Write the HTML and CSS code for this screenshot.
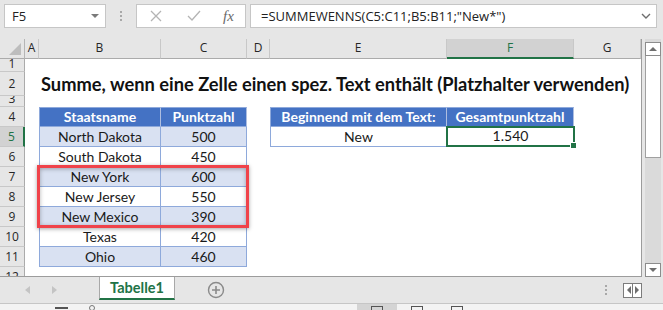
FILE: index.html
```html
<!DOCTYPE html>
<html lang="de">
<head>
    <title>Summe, wenn eine Zelle einen spez. Text enthält</title>
    <meta charset="UTF-8">
    <link rel="stylesheet" href="styles.css">
</head>
<body>
<div class="app">
    <div class="toolbar">
        <div class="namebox">
            <span class="nb-text">F5</span>
            <span class="nb-arrow"></span>
        </div>
        <div class="grip"><i></i><i></i><i></i></div>
        <div class="fxbox">
            <svg class="ico" width="12" height="12" viewBox="0 0 12 12"><path d="M1 1 L11 11 M11 1 L1 11" stroke="#b4b4b4" stroke-width="1.3" fill="none"/></svg>
            <svg class="ico" width="14" height="12" viewBox="0 0 14 12"><path d="M1 6 L5 10 L13 1" stroke="#b4b4b4" stroke-width="1.3" fill="none"/></svg>
            <span class="fx">fx</span>
        </div>
        <div class="formula">
            <span class="f-text">=SUMMEWENNS(C5:C11;B5:B11;"New*")</span>
            <svg width="10" height="6" viewBox="0 0 10 6"><path d="M1 1 L5 5 L9 1" stroke="#6e6e6e" stroke-width="1.4" fill="none"/></svg>
        </div>
    </div>

    <div class="main">
        <div class="sheet">
            <div class="row colhead">
                <div class="corner"><span class="tri"></span></div>
                <div class="ch">A</div>
                <div class="ch">B</div>
                <div class="ch">C</div>
                <div class="ch">D</div>
                <div class="ch">E</div>
                <div class="ch sel">F</div>
                <div class="ch">G</div>
            </div>
            <div class="row r1"><div class="rh">1</div></div>
            <div class="row r2">
                <div class="rh">2</div><div></div>
                <div class="title">Summe, wenn eine Zelle einen spez. Text enthält (Platzhalter verwenden)</div>
            </div>
            <div class="row r3"><div class="rh">3</div></div>
            <div class="row">
                <div class="rh">4</div><div></div>
                <div class="c th first">Staatsname</div>
                <div class="c th">Punktzahl</div>
                <div></div>
                <div class="c th first">Beginnend mit dem Text:</div>
                <div class="c th">Gesamtpunktzahl</div>
            </div>
            <div class="row">
                <div class="rh sel">5</div><div></div>
                <div class="c band first">North Dakota</div>
                <div class="c band">500</div>
                <div></div>
                <div class="c first">New</div>
                <div class="c active">1.540<span class="handle"></span></div>
            </div>
            <div class="row">
                <div class="rh">6</div><div></div>
                <div class="c first">South Dakota</div>
                <div class="c">450</div>
            </div>
            <div class="row">
                <div class="rh">7</div><div></div>
                <div class="c band first">New York</div>
                <div class="c band">600</div>
            </div>
            <div class="row">
                <div class="rh">8</div><div></div>
                <div class="c first">New Jersey</div>
                <div class="c">550</div>
            </div>
            <div class="row">
                <div class="rh">9</div><div></div>
                <div class="c band first">New Mexico</div>
                <div class="c band">390</div>
            </div>
            <div class="row">
                <div class="rh">10</div><div></div>
                <div class="c first">Texas</div>
                <div class="c">420</div>
            </div>
            <div class="row">
                <div class="rh">11</div><div></div>
                <div class="c band first">Ohio</div>
                <div class="c band">460</div>
            </div>
            <div class="row">
                <div class="rh">12</div>
            </div>
            <div class="redbox"></div>
        </div>
        <div class="vscroll">
            <div class="sb-btn"><span class="up"></span></div>
            <div class="thumb"></div>
            <div class="track"></div>
            <div class="sb-btn"><span class="down"></span></div>
        </div>
    </div>

    <div class="tabbar">
        <div class="nav"><span class="left"></span><span class="right"></span></div>
        <div class="tab">Tabelle1</div>
        <div class="plus">
            <svg width="18" height="18" viewBox="0 0 18 18"><circle cx="9" cy="9" r="7.5" stroke="#8a8a8a" stroke-width="1.4" fill="none"/><path d="M9 5 V13 M5 9 H13" stroke="#8a8a8a" stroke-width="1.6"/></svg>
        </div>
        <div class="spacer"></div>
        <div class="grip small"><i></i><i></i><i></i></div>
        <div class="split"><span class="left"></span><span class="right"></span></div>
    </div>

    <div class="statusbar">
        <span class="st-bar"></span>
        <span class="st-dot"></span>
        <div class="views">
            <span class="view on"><i></i></span>
            <span class="view"><i></i></span>
            <span class="view"><i></i></span>
        </div>
    </div>
</div>
</body>
</html>
```

FILE: styles.css
```css
body {
    margin: 0;
    background-color: #e6e6e6;
}

.app {
    width: 663px;
    height: 310px;
    overflow: hidden;
    background-color: #e6e6e6;
    font-family: "Open Sans", "Noto Sans", sans-serif;
}

/* formula bar */
.toolbar {
    height: 39px;
    display: flex;
    align-items: flex-start;
    padding-top: 4px;
    box-sizing: border-box;
}

.namebox {
    margin-left: 4px;
    width: 102px;
    height: 24px;
    box-sizing: border-box;
    background-color: white;
    border: 1px solid #c6c6c6;
    display: flex;
    align-items: center;
    justify-content: space-between;
    padding: 0 5px 0 7px;
}

.nb-text {
    font-size: 13px;
    color: #222;
}

.nb-arrow {
    width: 0;
    height: 0;
    border-left: 4px solid transparent;
    border-right: 4px solid transparent;
    border-top: 4px solid #7a7a7a;
    margin-right: 1px;
}

.grip {
    width: 30px;
    height: 24px;
    display: flex;
    flex-direction: column;
    align-items: center;
    justify-content: center;
    gap: 2px;
}

.grip i {
    width: 2px;
    height: 2px;
    background-color: #a8a8a8;
}

.fxbox {
    width: 110px;
    height: 24px;
    box-sizing: border-box;
    background-color: white;
    border: 1px solid #c6c6c6;
    display: flex;
    align-items: center;
    padding-left: 13px;
    gap: 25px;
}

.fx {
    font-family: "Liberation Serif", serif;
    font-style: italic;
    font-size: 15px;
    color: #6a6a6a;
    margin-left: -3px;
}

.formula {
    margin-left: 4px;
    width: 407px;
    height: 24px;
    box-sizing: border-box;
    background-color: white;
    border: 1px solid #c6c6c6;
    display: flex;
    align-items: center;
    justify-content: space-between;
    padding: 0 5px 0 10px;
}

.f-text {
    font-size: 13px;
    color: #222;
}

/* sheet */
.main {
    display: flex;
    height: 238px;
}

.sheet {
    position: relative;
    width: 642px;
    height: 238px;
    background-color: white;
    border-right: 1px solid #9c9c9c;
    border-bottom: 1px solid #9c9c9c;
    box-sizing: border-box;
    overflow: hidden;
}

.row {
    display: grid;
    grid-template-columns: 25px 14px 122px 86px 23px 177px 127px 1fr;
    height: 20px;
    font-family: "Lato", sans-serif;
    font-size: 14px;
    color: #1a1a1a;
}

.r1 { height: 14px; }
.r2 { height: 24px; }
.r3 { height: 11px; }

.colhead {
    height: 19px;
    background-color: #e6e6e6;
    font-family: "Open Sans", sans-serif;
    font-size: 12px;
    color: #262626;
}

.corner {
    position: relative;
    border-right: 1px solid #b5b5b5;
    border-bottom: 1px solid #ababab;
}

.tri {
    position: absolute;
    right: 3px;
    bottom: 3px;
    width: 0;
    height: 0;
    border-left: 12px solid transparent;
    border-bottom: 12px solid #bdbdbd;
}

.ch {
    border-right: 1px solid #c8c8c8;
    border-bottom: 1px solid #ababab;
    text-align: center;
    line-height: 18px;
}

.ch.sel {
    background-color: #d2d2d2;
    border-bottom: 2px solid #217346;
    color: #217346;
}

.rh {
    background-color: #e6e6e6;
    border-right: 1px solid #ababab;
    border-bottom: 1px solid #c8c8c8;
    box-sizing: border-box;
    font-family: "Open Sans", sans-serif;
    font-size: 12px;
    color: #262626;
    display: flex;
    align-items: center;
    justify-content: center;
    overflow: hidden;
}

.r1 .rh, .r3 .rh {
    align-items: flex-end;
    line-height: 14px;
}

.rh.sel {
    background-color: #d2d2d2;
    border-right: 2px solid #217346;
    color: #217346;
}

.title {
    grid-column: 3 / 9;
    white-space: nowrap;
    font-weight: bold;
    font-size: 18.3px;
    line-height: 24px;
    padding-left: 2px;
    color: #111;
}

.c {
    position: relative;
    box-sizing: border-box;
    text-align: center;
    line-height: 19px;
    border-right: 1px solid #8ea9db;
    border-bottom: 1px solid #8ea9db;
    white-space: nowrap;
}

.c.first {
    border-left: 1px solid #8ea9db;
}

.th {
    background-color: #4472c4;
    color: white;
    font-weight: bold;
    border-top: 1px solid #8ea9db;
    line-height: 18px;
    border-right-color: #aebee0;
}

.band {
    background-color: #d9e1f2;
}

.active {
    border: 2px solid #217346;
    line-height: 16px;
    margin: -1px -1px 0 -1px;
}

.handle {
    position: absolute;
    right: -4px;
    bottom: -4px;
    width: 5px;
    height: 5px;
    background-color: #217346;
    border: 1px solid white;
}

.redbox {
    position: absolute;
    left: 37px;
    top: 126px;
    width: 212px;
    height: 63px;
    box-sizing: border-box;
    border: 3px solid #f0434a;
    box-shadow: 0 1px 4px rgba(0, 0, 0, 0.35), inset 0 1px 4px rgba(0, 0, 0, 0.3);
}

/* vertical scrollbar */
.vscroll {
    width: 16px;
    margin-left: 3px;
    padding-top: 3px;
    display: flex;
    flex-direction: column;
    background-color: #dadada;
}

.sb-btn {
    height: 14px;
    box-sizing: border-box;
    border: 1px solid #8c8c8c;
    background-color: white;
    display: flex;
    align-items: center;
    justify-content: center;
}

.up {
    border-left: 4px solid transparent;
    border-right: 4px solid transparent;
    border-bottom: 4px solid #6e6e6e;
}

.down {
    border-left: 4px solid transparent;
    border-right: 4px solid transparent;
    border-top: 4px solid #6e6e6e;
}

.thumb {
    height: 102px;
    box-sizing: border-box;
    border: 1px solid #a0a0a0;
    border-top: none;
    background-color: white;
}

.track {
    flex: 1;
}

/* sheet tabs */
.tabbar {
    height: 26px;
    display: flex;
    align-items: center;
    border-bottom: 1px solid #c6c6c6;
}

.nav {
    width: 99px;
    display: flex;
    gap: 22px;
    padding-left: 25px;
    box-sizing: border-box;
}

.nav span, .split span {
    width: 0;
    height: 0;
    border-top: 4px solid transparent;
    border-bottom: 4px solid transparent;
}

.nav .left {
    border-right: 5px solid #c4c4c4;
}

.nav .right {
    border-left: 5px solid #c4c4c4;
}

.tab {
    align-self: flex-start;
    width: 76px;
    height: 24px;
    box-sizing: border-box;
    background-color: white;
    border-left: 1px solid #a8a8a8;
    border-right: 1px solid #a8a8a8;
    border-bottom: 2px solid #217346;
    margin-top: -1px;
    text-align: center;
    font-family: "Lato", sans-serif;
    font-weight: bold;
    font-size: 14.5px;
    line-height: 23px;
    color: #217346;
}

.plus {
    margin-left: 32px;
    display: flex;
}

.spacer {
    flex: 1;
}

.grip.small {
    width: 6px;
    height: 14px;
    gap: 2px;
    margin-right: 14px;
}

.split {
    width: 17px;
    height: 13px;
    border: 1px solid #7c7c7c;
    background-color: white;
    display: flex;
    align-items: center;
    justify-content: center;
    margin-right: 21px;
    position: relative;
}

.split::after {
    content: "";
    position: absolute;
    left: 8px;
    top: 0;
    width: 1px;
    height: 13px;
    background-color: #7c7c7c;
}

.split .left {
    border-right: 4px solid #6e6e6e;
    margin-right: 4px;
}

.split .right {
    border-left: 4px solid #6e6e6e;
}

/* status bar */
.statusbar {
    height: 6px;
    background-color: #f3f3f3;
    display: flex;
    align-items: flex-end;
    position: relative;
}

.st-bar {
    width: 13px;
    height: 2px;
    margin-left: 55px;
    background-color: #555;
    align-self: flex-start;
    margin-top: 3px;
}

.st-dot {
    width: 4px;
    height: 4px;
    border: 1px solid #777;
    border-radius: 50%;
    margin-left: 21px;
    align-self: flex-start;
    margin-top: 1px;
}

.views {
    margin-left: 262px;
    display: flex;
    align-self: stretch;
}

.view {
    width: 40px;
    display: flex;
    justify-content: center;
}

.view.on {
    background-color: #d4d4d4;
}

.view i {
    width: 12px;
    height: 6px;
    margin-top: 2px;
    box-sizing: border-box;
    border: 1px solid #555;
    border-bottom: none;
}
```
